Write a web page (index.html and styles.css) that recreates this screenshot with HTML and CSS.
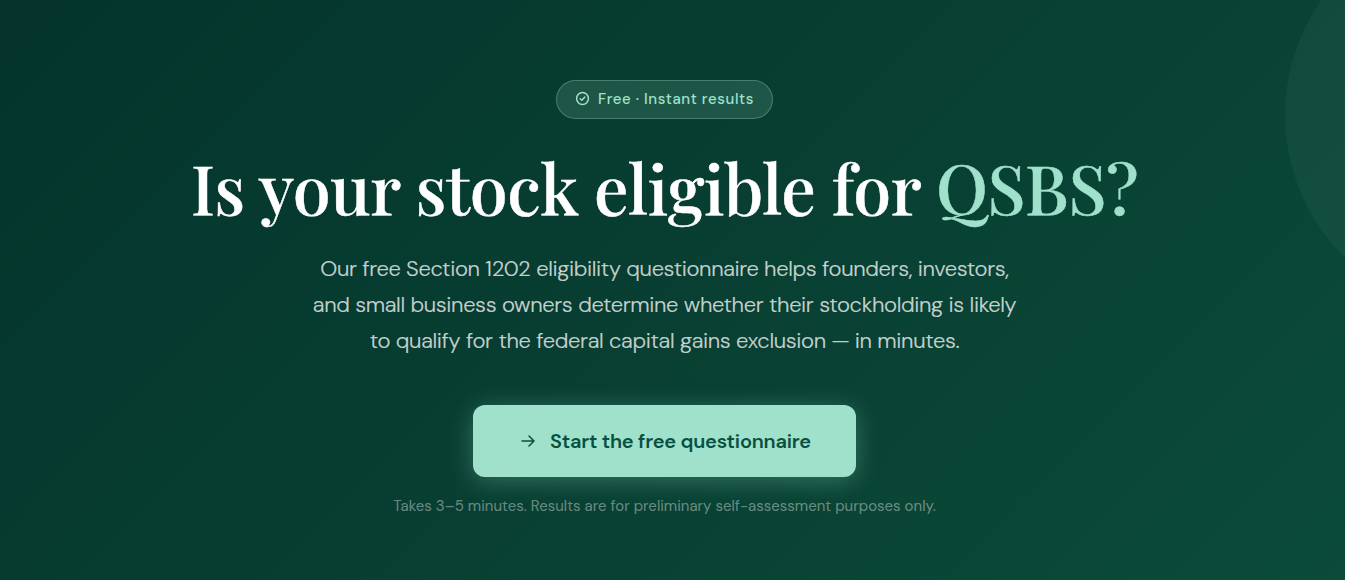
FILE: index.html
```html
<!DOCTYPE html>
<html lang="en">
<head>
    <meta charset="UTF-8">
    <meta name="viewport" content="width=device-width, initial-scale=1.0">
    <title>QSBS Eligibility Questionnaire</title>
    <link rel="stylesheet" href="styles.css">
</head>
<body>

    <section class="hero">
        <div class="hero-badge">
            <svg width="15" height="15" viewBox="0 0 15 15" fill="none" stroke="currentColor" stroke-width="1.5" stroke-linecap="round" stroke-linejoin="round">
                <circle cx="7.5" cy="7.5" r="5.9"/>
                <path d="M5.2 7.7l1.6 1.5L9.8 6"/>
            </svg>
            <span>Free · Instant results</span>
        </div>

        <h1>Is your stock eligible for <span class="accent">QSBS?</span></h1>

        <p class="hero-text">
            Our free Section 1202 eligibility questionnaire helps founders, investors,<br>
            and small business owners determine whether their stockholding is likely<br>
            to qualify for the federal capital gains exclusion — in minutes.
        </p>

        <a class="hero-btn" href="#">
            <svg width="14" height="14" viewBox="0 0 14 14" fill="none" stroke="currentColor" stroke-width="1.5" stroke-linecap="round" stroke-linejoin="round">
                <path d="M1 7h12M8 2L13 7l-5 5"/>
            </svg>
            <span>Start the free questionnaire</span>
        </a>

        <p class="hero-note">Takes 3–5 minutes. Results are for preliminary self-assessment purposes only.</p>
    </section>

</body>
</html>
```
FILE: styles.css
```css
* {
    box-sizing: border-box;
}

body {
    margin: 0;
    font-family: "DM Sans", Lato, sans-serif;
}

.hero {
    position: relative;
    overflow: hidden;
    display: flex;
    flex-direction: column;
    align-items: center;
    height: 580px;
    padding: 80px 16px 0 0;
    background: linear-gradient(135deg, #04342c 0%, #083f32 50%, #0b4b39 100%);
    text-align: center;
}

/* decorative circle, cut off by the right edge */
.hero::before {
    content: "";
    position: absolute;
    top: -85px;
    right: -340px;
    width: 400px;
    height: 400px;
    border-radius: 50%;
    background: rgba(255, 255, 255, 0.04);
}

.hero-badge {
    display: flex;
    align-items: center;
    justify-content: center;
    gap: 8px;
    width: 217px;
    height: 39px;
    padding-bottom: 2px;
    border: 1px solid rgba(159, 225, 203, 0.3);
    border-radius: 20px;
    background: rgba(159, 225, 203, 0.15);
    color: #9fe1cb;
    font-size: 15px;
    font-weight: 500;
    letter-spacing: 0.6px;
    white-space: nowrap;
}

h1 {
    margin: 28px 0 0;
    height: 80px;
    color: #fff;
    font-family: "Playfair Display", "Liberation Serif", serif;
    font-size: 68.4px;
    font-weight: 500;
    line-height: 80px;
    letter-spacing: -0.4px;
    white-space: nowrap;
    -webkit-text-stroke: 0.5px currentColor;
}

h1 .accent {
    color: #9fe1cb;
}

.hero-text {
    margin: 24px 0 0;
    color: rgba(255, 255, 255, 0.75);
    font-size: 22px;
    font-weight: 300;
    line-height: 36px;
    letter-spacing: -0.34px;
    white-space: nowrap;
    -webkit-text-stroke: 0.15px currentColor;
}

.hero-btn {
    display: flex;
    flex-shrink: 0;
    align-items: center;
    gap: 15px;
    width: 383px;
    height: 72px;
    margin-top: 46px;
    padding-left: 48px;
    border-radius: 12px;
    background: #9fe1cb;
    box-shadow: 0 4px 24px rgba(159, 225, 203, 0.3);
    color: #085041;
    font-size: 20px;
    font-weight: 600;
    letter-spacing: -0.22px;
    text-decoration: none;
    white-space: nowrap;
}

.hero-note {
    margin: 19px 0 0;
    color: rgba(255, 255, 255, 0.4);
    font-size: 15px;
    line-height: 20px;
    white-space: nowrap;
}
```
